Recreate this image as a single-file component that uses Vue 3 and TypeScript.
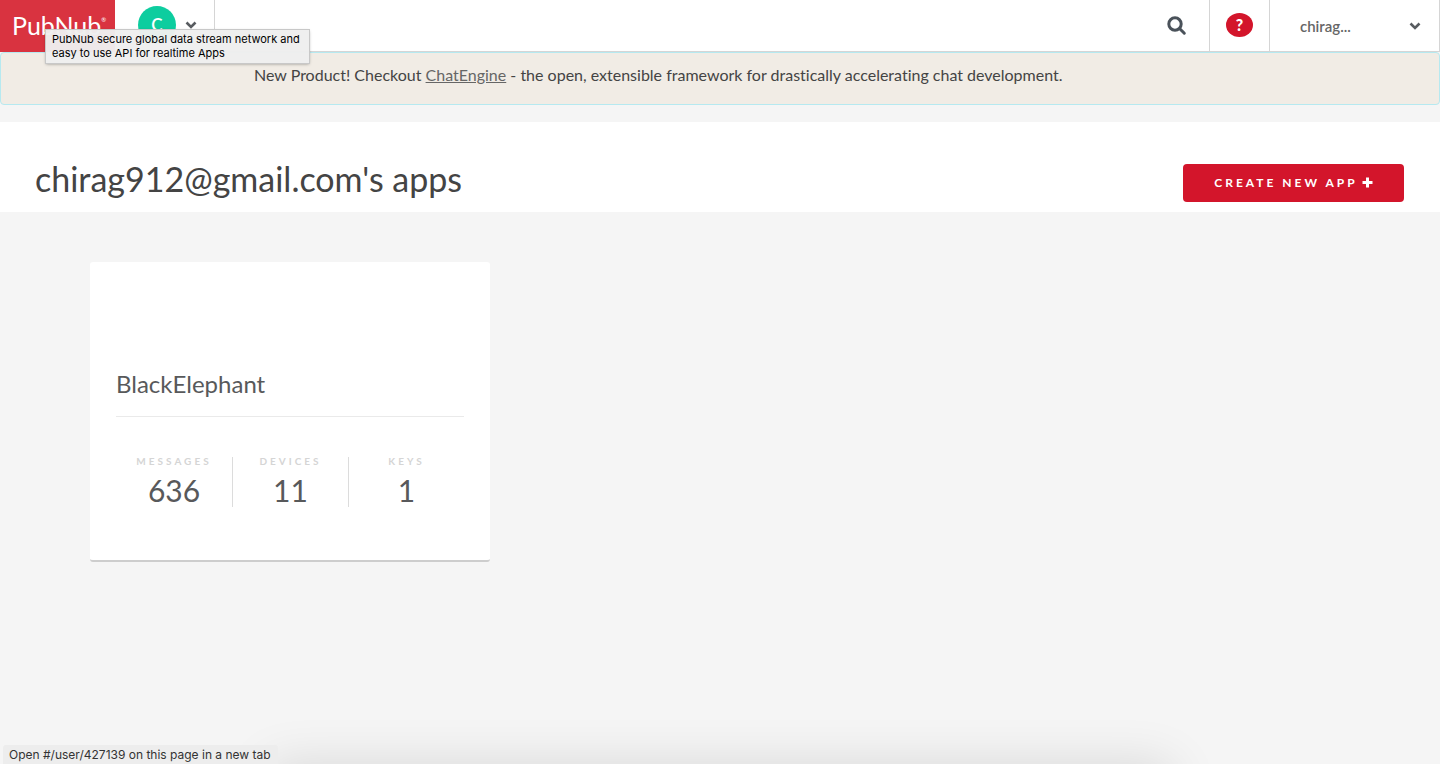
<script setup lang="ts">
interface Stat {
  label: string
  value: number
}

interface AppCard {
  name: string
  stats: Stat[]
}

const account = 'chirag912@gmail.com'

const apps: AppCard[] = [
  {
    name: 'BlackElephant',
    stats: [
      { label: 'Messages', value: 636 },
      { label: 'Devices', value: 11 },
      { label: 'Keys', value: 1 },
    ],
  },
]
</script>

<template>
  <div class="page">
    <header class="topbar">
      <a class="logo" href="#/" aria-describedby="logo-tip">PubNub<sup class="reg">®</sup></a>
      <button class="switcher" type="button" aria-label="Switch account">
        <span class="avatar">C</span>
        <svg class="chevron" viewBox="0 0 12 8" aria-hidden="true">
          <path d="M1.500 1.500 6 6 10.500 1.500" />
        </svg>
      </button>
      <div class="tooltip" id="logo-tip" role="tooltip">
        PubNub secure global data stream network and<br />easy to use API for realtime Apps
      </div>
      <nav class="tools" aria-label="Account">
        <button class="search" type="button" aria-label="Search">
          <svg viewBox="0 0 20 20" aria-hidden="true">
            <circle cx="8" cy="8" r="6.200" />
            <path d="M12.800 12.800 17.300 17.200" />
          </svg>
        </button>
        <button class="help" type="button" aria-label="Help">
          <span class="help-dot">?</span>
        </button>
        <button class="user" type="button">
          <span>chirag...</span>
          <svg class="chevron" viewBox="0 0 12 8" aria-hidden="true">
            <path d="M1.500 1.500 6 6 10.500 1.500" />
          </svg>
        </button>
      </nav>
    </header>

    <div class="notice">
      <p>
        New Product! Checkout <a href="#/chat-engine">ChatEngine</a> - the open, extensible
        framework for drastically accelerating chat development.
      </p>
    </div>

    <section class="heading">
      <h1>{{ account }}'s apps</h1>
      <button class="create" type="button">
        Create new app
        <svg viewBox="0 0 11 11" aria-hidden="true">
          <path d="M4 0.500h3V4h3.500v3H7v3.500H4V7H0.500V4H4z" />
        </svg>
      </button>
    </section>

    <main class="apps">
      <article v-for="app in apps" :key="app.name" class="card">
        <h2>{{ app.name }}</h2>
        <dl class="stats">
          <div v-for="stat in app.stats" :key="stat.label" class="stat">
            <dt>{{ stat.label }}</dt>
            <dd>{{ stat.value }}</dd>
          </div>
        </dl>
      </article>
    </main>

    <div class="bottom-shade" aria-hidden="true"><div></div></div>
    <div class="status" role="status">Open #/user/427139 on this page in a new tab</div>
  </div>
</template>

<style>
body {
  background: #f5f5f5;
}
</style>

<style scoped>
.page {
  position: relative;
  min-height: 100vh;
  box-sizing: border-box;
  background: #f5f5f5;
  color: #444;
  font-family: Lato, "Open Sans", sans-serif;
  font-variant-ligatures: none;
}

button {
  margin: 0;
  padding: 0;
  border: 0;
  background: none;
  color: inherit;
  font: inherit;
  cursor: pointer;
}

.topbar {
  position: relative;
  display: flex;
  height: 51px;
  border-right: 1px solid #d5d5d5;
  border-bottom: 1px solid #d5d5d5;
  background: #fff;
}

.logo {
  width: 115px;
  height: 52px;
  box-sizing: border-box;
  padding-left: 12px;
  background: #d93340;
  color: #fff;
  font-size: 25px;
  line-height: 50px;
  text-decoration: none;
  white-space: nowrap;
}

.reg {
  font-size: 6px;
  line-height: 6px;
  vertical-align: 13px;
}

.switcher {
  display: flex;
  align-items: center;
  gap: 9px;
  width: 100px;
  box-sizing: border-box;
  padding-bottom: 2px;
  padding-left: 23px;
  border-right: 1px solid #d5d5d5;
}

.avatar {
  width: 38px;
  height: 38px;
  border-radius: 50%;
  background: #0dcd9f;
  color: #fff;
  font-size: 17px;
  font-weight: 600;
  line-height: 38px;
  text-align: center;
}

.chevron {
  width: 12px;
  height: 8px;
  fill: none;
  stroke: #585c60;
  stroke-width: 2.6;
}

.tooltip {
  position: absolute;
  top: 30px;
  left: 46px;
  z-index: 2;
  padding: 2px 9px 3px 6px;
  background: rgba(238, 238, 238, 0.97);
  box-shadow: 0 0 0 1px #c8c8c8, 0 1px 3px rgba(0, 0, 0, 0.4);
  color: #000;
  font-family: Inter, "Open Sans", sans-serif;
  font-size: 11px;
  line-height: 14px;
  white-space: nowrap;
}

.tools {
  display: flex;
  margin-left: auto;
}

.search {
  display: flex;
  align-items: center;
  justify-content: center;
  width: 64px;
}

.search svg {
  width: 20px;
  height: 20px;
  fill: none;
  stroke: #4a525a;
  stroke-width: 3;
  stroke-linecap: round;
}

.help {
  display: flex;
  align-items: center;
  justify-content: center;
  width: 61px;
  box-sizing: border-box;
  padding-bottom: 2px;
  border-right: 1px solid #d5d5d5;
  border-left: 1px solid #d5d5d5;
}

.help-dot {
  width: 27px;
  height: 24px;
  border-radius: 50%;
  background: #d3152b;
  color: #fff;
  font-size: 16px;
  font-weight: 900;
  line-height: 24px;
}

.user {
  display: flex;
  align-items: center;
  justify-content: space-between;
  width: 169px;
  box-sizing: border-box;
  padding: 0 18px 0 30px;
  color: #666;
  font-size: 15px;
  font-weight: 600;
}

.notice {
  height: 51px;
  border: 1px solid #b6e9f0;
  border-radius: 4px;
  background: #f1ece5;
}

.notice p {
  margin: 0;
  padding: 12px 0 0 253px;
  font-size: 16px;
  line-height: 20px;
}

.notice a {
  color: #666;
}

.heading {
  display: flex;
  align-items: flex-end;
  justify-content: space-between;
  height: 90px;
  box-sizing: border-box;
  margin-top: 17px;
  padding: 0 36px 10px 35px;
  background: #fff;
}

h1 {
  margin: 0;
  font-size: 34px;
  font-weight: 400;
  line-height: 46px;
}

.create {
  display: flex;
  align-items: center;
  justify-content: center;
  gap: 4px;
  width: 221px;
  height: 38px;
  padding-bottom: 2px;
  border-radius: 4px;
  background: #d3152b;
  color: #fff;
  font-size: 12px;
  font-weight: 700;
  letter-spacing: 3px;
  text-transform: uppercase;
}

.create svg {
  width: 11px;
  height: 11px;
  fill: #fff;
}

.apps {
  display: flex;
  flex-wrap: wrap;
  gap: 50px;
  padding: 50px 90px;
}

.card {
  width: 400px;
  height: 300px;
  box-sizing: border-box;
  padding: 106px 26px 0;
  border-bottom: 2px solid #cdcdcd;
  border-radius: 3px;
  background: #fff;
  color: #58595b;
}

h2 {
  margin: 0;
  padding-bottom: 16px;
  border-bottom: 1px solid #eaeaea;
  font-size: 24px;
  font-weight: 400;
  line-height: 32px;
}

.stats {
  display: grid;
  grid-template-columns: 117px 116px 1fr;
  margin: 40px 0 0;
}

.stat {
  height: 50px;
  box-sizing: border-box;
  border-right: 1px solid #dcdcdc;
  text-align: center;
}

.stat:last-child {
  border-right: 0;
}

.stat dt {
  color: #d5d5d5;
  font-size: 10px;
  font-weight: 700;
  letter-spacing: 3px;
  line-height: 8px;
  text-transform: uppercase;
}

.stat dd {
  margin: 7px 0 0;
  font-size: 30px;
  line-height: 36px;
}

.bottom-shade {
  position: absolute;
  right: 0;
  bottom: 0;
  left: 0;
  height: 50px;
  overflow: hidden;
}

.bottom-shade div {
  height: 50px;
  margin: 50px 268px 0;
  box-shadow: 0 0 50px rgba(0, 0, 0, 0.12);
}

.status {
  position: absolute;
  bottom: 0;
  left: 3px;
  padding: 1px 7px 0 6px;
  border-radius: 3px 3px 0 0;
  background: #ededed;
  color: #333;
  font-family: Inter, "Open Sans", sans-serif;
  font-size: 12px;
  line-height: 18px;
}
</style>
